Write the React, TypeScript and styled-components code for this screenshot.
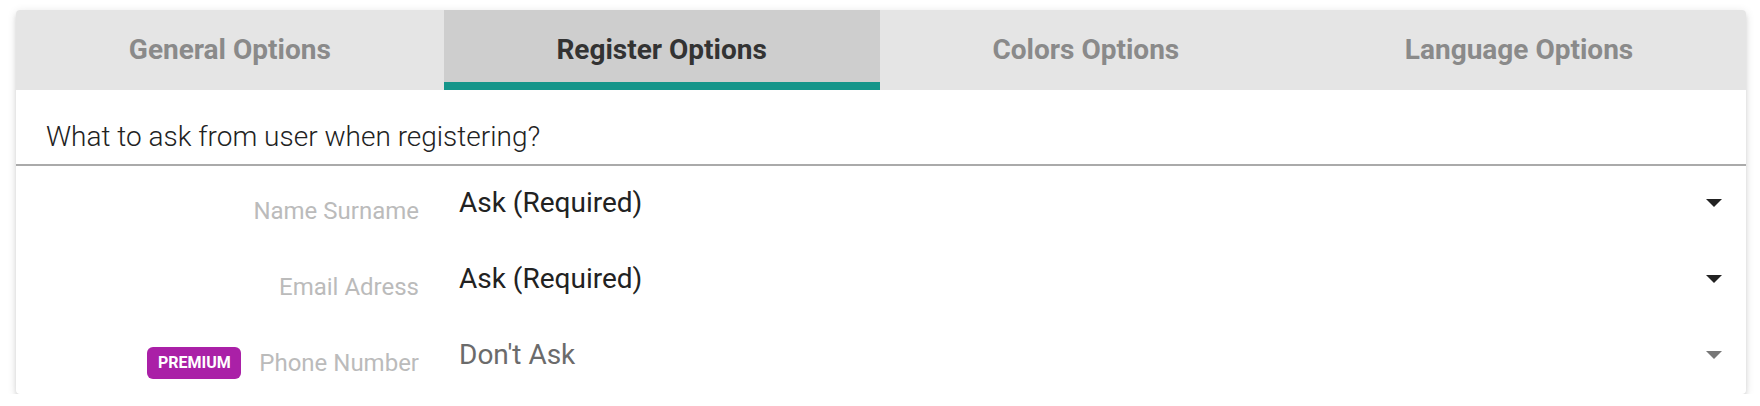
import React from "react";
import styled, { createGlobalStyle } from "styled-components";

const GlobalStyle = createGlobalStyle`
    body {
        margin: 0;
        background: #ffffff;
        font-family: Roboto, "Liberation Sans", sans-serif;
    }
`;

interface Field {
    label: string;
    value: string;
    premium?: boolean;
    disabled?: boolean;
}

const tabs = ["General Options", "Register Options", "Colors Options", "Language Options"];

const fields: Field[] = [
    { label: "Name Surname", value: "Ask (Required)" },
    { label: "Email Adress", value: "Ask (Required)" },
    { label: "Phone Number", value: "Don't Ask", premium: true, disabled: true }
];

const Caret = ({ disabled }: { disabled?: boolean }) => (
    <CaretIcon width="16" height="8" viewBox="0 0 16 8">
        <path d="M0 0 L16 0 L8 8 Z" fill={disabled ? "#777777" : "#222222"} />
    </CaretIcon>
);

const App = () => {
    return (
        <>
            <GlobalStyle />
            <Page>
                <Card>
                    <TabBar>
                        {tabs.map((t, i) => (
                            <Tab key={t} $active={i === 1}>
                                {t}
                            </Tab>
                        ))}
                    </TabBar>
                    <Heading>What to ask from user when registering?</Heading>
                    {fields.map((f) => (
                        <Row key={f.label}>
                            <LabelCell>
                                {f.premium ? <Badge>PREMIUM</Badge> : null}
                                <Label>{f.label}</Label>
                            </LabelCell>
                            <Select>
                                <Value $disabled={f.disabled}>{f.value}</Value>
                                <Caret disabled={f.disabled} />
                            </Select>
                        </Row>
                    ))}
                </Card>
            </Page>
        </>
    );
};

export default App;

const Page = styled.div`
    padding: 10px 14px 0 16px;
`;

const Card = styled.div`
    background: #ffffff;
    border-radius: 4px;
    overflow: hidden;
    box-shadow: 0 4px 4px 0 rgba(0, 0, 0, 0.1), 0 2px 10px 0 rgba(0, 0, 0, 0.12);
`;

const TabBar = styled.div`
    display: flex;
    height: 80px;
    background: #e5e5e5;
`;

const Tab = styled.div<{ $active?: boolean }>`
    flex: 1 1 auto;
    padding: 0 20px;
    text-align: center;
    line-height: 80px;
    font-size: 28px;
    font-weight: 700;
    color: ${(p) => (p.$active ? "#333333" : "#8a8a8a")};
    background: ${(p) => (p.$active ? "#cecece" : "transparent")};
    box-shadow: ${(p) => (p.$active ? "inset 0 -8px 0 #15958a" : "none")};
    white-space: nowrap;
`;

const Heading = styled.div`
    padding: 26px 30px 6px;
    font-size: 28px;
    font-weight: 300;
    line-height: 42px;
    color: #222222;
    border-bottom: 2px solid #aaaaaa;
`;

const Row = styled.div`
    display: flex;
    align-items: center;
    height: 76px;
`;

const LabelCell = styled.div`
    display: flex;
    align-items: center;
    justify-content: flex-end;
    gap: 18px;
    width: 403px;
    padding-top: 13px;
    box-sizing: border-box;
`;

const Label = styled.span`
    font-size: 24px;
    color: #bbbbbb;
    white-space: nowrap;
`;

const Badge = styled.span`
    display: inline-flex;
    align-items: center;
    justify-content: center;
    width: 94px;
    height: 32px;
    border-radius: 6px;
    background: #aa20a7;
    color: #ffffff;
    font-size: 16px;
    font-weight: 700;
`;

const Select = styled.div`
    flex: 1;
    display: flex;
    align-items: center;
    justify-content: space-between;
    margin: 0 24px 0 40px;
    padding-bottom: 3px;
`;

const Value = styled.span<{ $disabled?: boolean }>`
    font-size: 28px;
    color: ${(p) => (p.$disabled ? "#6b6b6b" : "#222222")};
`;

const CaretIcon = styled.svg`
    display: block;
    flex-shrink: 0;
`;
